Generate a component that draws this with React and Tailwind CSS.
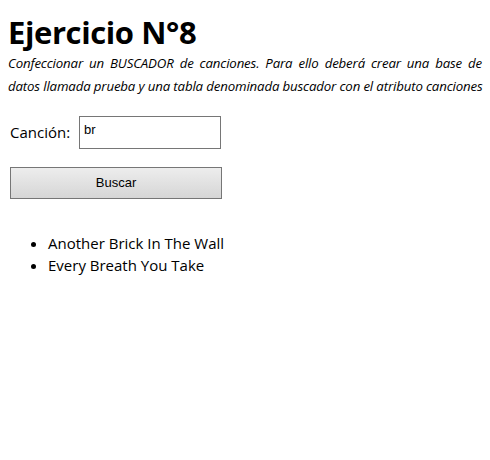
import React, { useState } from "react";

const canciones = ["Another Brick In The Wall", "Every Breath You Take"];

export default function App() {
  const [query, setQuery] = useState("br");

  return (
    <div className="min-h-[460px] bg-white px-2 pt-[12px] text-black font-['Open_Sans',sans-serif]">
      <h1 className="text-[31px] font-bold leading-[40px] tracking-[-0.4px]">Ejercicio N°8</h1>
      <p className="text-[13.25px] italic leading-[23px] tracking-[-0.15px]">
        <span className="block text-justify [text-align-last:justify]">
          Confeccionar un BUSCADOR de canciones. Para ello deberá crear una base de
        </span>
        <span className="block whitespace-nowrap">
          datos llamada prueba y una tabla denominada buscador con el atributo canciones
        </span>
      </p>
      <form className="mt-[18px] w-[213px]" onSubmit={(e) => e.preventDefault()}>
        <div className="flex items-center">
          <label htmlFor="cancion" className="ml-[2px] w-[70px] text-[15px]">
            Canción:
          </label>
          <input
            id="cancion"
            type="text"
            value={query}
            onChange={(e) => setQuery(e.target.value)}
            className="h-[33px] w-[142px] border border-[#767676] bg-white px-[4px] pb-[6px] font-['Liberation_Sans',sans-serif] text-[13px] outline-none"
          />
        </div>
        <button
          type="submit"
          className="mt-[18px] ml-[2px] h-[32px] w-[212px] border border-[#767676] bg-gradient-to-b from-[#ededed] to-[#d6d6d6] font-['Liberation_Sans',sans-serif] text-[13px]"
        >
          Buscar
        </button>
      </form>
      <ul className="mt-[33px] list-disc pl-[40px] text-[15px] leading-[22px]">
        {canciones.map((c) => (
          <li key={c}>{c}</li>
        ))}
      </ul>
    </div>
  );
}
